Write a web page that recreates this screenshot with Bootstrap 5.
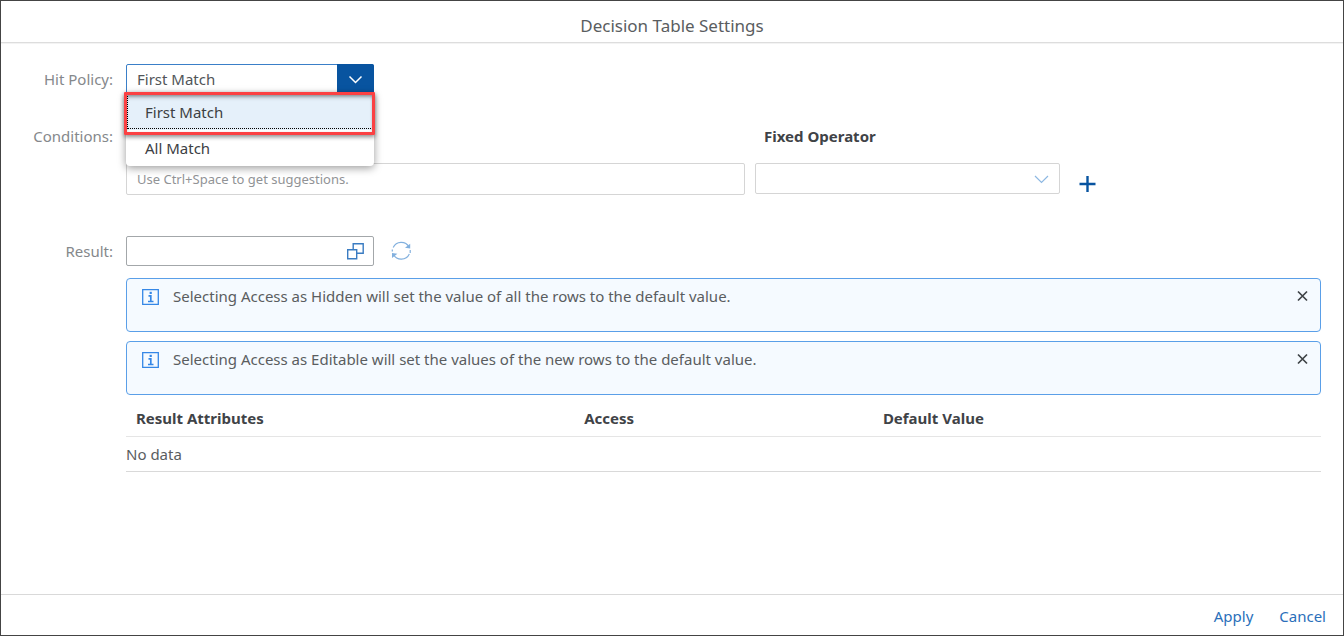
<!DOCTYPE html>
<html lang="en">
<head>
<meta charset="utf-8">
<meta name="viewport" content="width=device-width, initial-scale=1">
<title>Decision Table Settings</title>
<link href="https://cdn.jsdelivr.net/npm/bootstrap@5.3.0/dist/css/bootstrap.min.css" rel="stylesheet">
<style>
body { font-family: "Noto Sans", "Open Sans", sans-serif; font-size: 15px; line-height: 20px; color: #5a5d60; background: #fff; }
.dialog { border: 1px solid #444; }
.dialog-head { padding: 15px 0 6px; border-bottom: 1px solid #ddd; box-shadow: 0 1px #f3f3f3; }
.dialog-head h1 { font-size: 17px; line-height: 20px; font-weight: 400; }
.dialog-body { padding: 21px 22px 0 0; }
.dialog-foot { padding: 2px 4px 0; height: 41px; border-top: 1px solid #d9d9d9; }
.dialog-foot .btn { font-size: 15px; line-height: 20px; color: #2a6fba; padding: 4px 13px; border: 0; }
.row-label { width: 112px; margin-right: 13px; text-align: right; color: #85888b; flex: none; }
.field-label { padding-top: 5px; }
.box { font-size: 15px; line-height: 20px; border-radius: 2px; background: #fff; color: #515559; box-shadow: none; }
.small-box { width: 248px; height: 30px; }
.hit { border: 1px solid #3a7fc8; padding: 4px 10px; background-image: none; }
.hit-arrow { width: 37px; background: #0854a0; pointer-events: none; border-radius: 0 2px 0 0; }
.options { top: 29px; width: 248px; min-width: 0; padding: 0; border: 0; border-radius: 0 0 4px 4px; box-shadow: 0 2px 8px rgba(0,0,0,.4); color: #32363a; }
.options button { padding: 8px 19px; font-size: 15px; line-height: 20px; color: #3c4044; }
.options .chosen { background: #e5f0fa; outline: 1px dotted #000; outline-offset: -2px; height: 37px; box-shadow: inset 0 6px 4px -2px rgba(0,0,0,.3); }
.callout { inset: -1px -1px auto -2px; height: 43px; border: 3px solid #fb4143; border-radius: 1px; pointer-events: none; box-shadow: 0 2px 4px rgba(0,0,0,.45), inset 0 1px 3px rgba(0,0,0,.2); }
.conditions { display: grid; grid-template-columns: 51.8% 25.5% auto; column-gap: 10px; justify-content: start; }
.cond-title { font-weight: 700; color: #3f4347; padding: 0 9px; grid-column: 2; margin-bottom: 17px; }
.cond-box { border: 1px solid #d5d5d5; }
.expression { grid-column: 1; height: 32px; font-size: 13px; padding: 5px 10px; }
.expression::placeholder { color: #919396; opacity: 1; }
.operator { height: 31px; background-image: none; }
.result-row { margin-top: 41px; }
.value-box { border: 1px solid #a3a7aa; }
.message { border: 1px solid #5a9fe8; border-radius: 4px; background: #f5faff; min-height: 54px; padding: 7px 12px 0 15px; gap: 13px; }
.message + .message { margin-top: 9px; }
.message svg { margin-top: 3px; }
.results { --bs-table-bg: transparent; color: #515559; margin: 0; table-layout: fixed; }
.results th { padding: 13px 10px 8px; color: #3f4347; font-weight: 700; border-bottom: 1px solid #e5e5e5; }
.results td { padding: 7px 0; color: #5a5d60; border-bottom: 1px solid #d9d9d9; }
.wide-col { width: 37.5%; }
.access-col { width: 25%; }
svg { display: block; fill: none; }
</style>
</head>
<body>
<div class="dialog min-vh-100 d-flex flex-column">
  <header class="dialog-head text-center"><h1 class="m-0">Decision Table Settings</h1></header>
  <main class="dialog-body flex-grow-1">
    <div class="d-flex">
      <label class="row-label field-label" for="hit">Hit Policy:</label>
      <div class="position-relative">
        <select id="hit" class="form-select box small-box hit"><option>First Match</option><option>All Match</option></select>
        <span class="hit-arrow position-absolute top-0 end-0 h-100 d-flex align-items-center justify-content-center">
          <svg width="16" height="16" viewBox="0 0 16 16" stroke="#fff" stroke-width="1.5"><path d="M1.500 5.500l6 6 6-6"/></svg>
        </span>
        <div class="dropdown-menu options show">
          <button type="button" class="dropdown-item chosen">First Match</button>
          <button type="button" class="dropdown-item">All Match</button>
          <span class="callout position-absolute"></span>
        </div>
      </div>
    </div>

    <div class="d-flex mt-4 pt-2">
      <label class="row-label" for="expression">Conditions:</label>
      <div class="conditions flex-grow-1">
        <label class="cond-title" for="operator">Fixed Operator</label>
        <input id="expression" type="text" class="form-control box cond-box expression" placeholder="Use Ctrl+Space to get suggestions.">
        <div class="position-relative">
          <select id="operator" class="form-select box cond-box operator"><option></option></select>
          <svg class="position-absolute top-50 end-0 translate-middle-y me-2 pe-none" width="20" height="16" viewBox="0 0 20 16" stroke="#8db8e2" stroke-width="1.2"><path d="M3 5l6.500 6.500 6.500-6.500"/></svg>
        </div>
        <button type="button" class="btn border-0 p-0 ms-2 mt-2" aria-label="Add">
          <svg width="20" height="24" viewBox="0 0 20 24" stroke="#0854a0" stroke-width="2.4"><path d="M1.500 13h16M9.500 5v16"/></svg>
        </button>
      </div>
    </div>

    <div class="d-flex result-row">
      <label class="row-label field-label" for="result">Result:</label>
      <div class="flex-grow-1">
        <div class="d-flex align-items-center">
          <div class="position-relative">
            <input id="result" type="text" class="form-control box small-box value-box">
            <button type="button" class="btn border-0 p-0 position-absolute top-50 end-0 translate-middle-y me-2" aria-label="Select value">
              <svg width="20" height="18" viewBox="0 0 20 18" stroke="#3a7cc2" stroke-width="1.4"><path d="M1.700 7.700h9v9h-9zM7.200 7V1.700h10v9.500h-6"/></svg>
            </button>
          </div>
          <button type="button" class="btn border-0 p-0 ms-3" aria-label="Refresh">
            <svg width="22" height="22" viewBox="0 0 22 22" stroke="#82b0de" stroke-width="1.2"><path d="M3.200 7.500a8.800 8.800 0 0 1 15.800-.5M19.300 14a8.800 8.800 0 0 1-15.800.5M20.200 10V13M2.300 9.500V11.500"/><path d="M20.200 3.800v4.700l-5.200-.8zM2 18v-5l5.400.8z" fill="#82b0de" stroke="none"/></svg>
          </button>
        </div>
        <div class="mt-2 pt-1">
          <div class="message d-flex align-items-start">
            <svg width="18" height="16" viewBox="0 0 18 16" stroke="#3587e6" stroke-width="1.3"><path d="M.7.700h15.600v14.600H.7z"/><path d="M6.500 6.800h2.300v5.700M6 12.500h5.500" stroke-width="1.700"/><path d="M7.600 2.800h2.200v2.200h-2.200z" fill="#3587e6" stroke="none"/></svg>
            <span class="flex-grow-1">Selecting Access as Hidden will set the value of all the rows to the default value.</span>
            <button type="button" class="btn border-0 p-0" aria-label="Close"><svg width="12" height="14" viewBox="0 0 12 14" stroke="#3f4347" stroke-width="1.7"><path d="M2 2.500l9 9m0-9l-9 9"/></svg></button>
          </div>
          <div class="message d-flex align-items-start">
            <svg width="18" height="16" viewBox="0 0 18 16" stroke="#3587e6" stroke-width="1.3"><path d="M.7.700h15.600v14.600H.7z"/><path d="M6.500 6.800h2.300v5.700M6 12.500h5.500" stroke-width="1.700"/><path d="M7.600 2.800h2.200v2.200h-2.200z" fill="#3587e6" stroke="none"/></svg>
            <span class="flex-grow-1">Selecting Access as Editable will set the values of the new rows to the default value.</span>
            <button type="button" class="btn border-0 p-0" aria-label="Close"><svg width="12" height="14" viewBox="0 0 12 14" stroke="#3f4347" stroke-width="1.7"><path d="M2 2.500l9 9m0-9l-9 9"/></svg></button>
          </div>
        </div>
        <table class="table results">
          <thead><tr><th class="wide-col">Result Attributes</th><th class="access-col">Access</th><th class="wide-col">Default Value</th></tr></thead>
          <tbody><tr><td colspan="3">No data</td></tr></tbody>
        </table>
      </div>
    </div>
  </main>
  <footer class="dialog-foot d-flex justify-content-end align-items-center">
    <button type="button" class="btn">Apply</button>
    <button type="button" class="btn">Cancel</button>
  </footer>
</div>
<script src="https://cdn.jsdelivr.net/npm/bootstrap@5.3.0/dist/js/bootstrap.bundle.min.js"></script>
</body>
</html>
